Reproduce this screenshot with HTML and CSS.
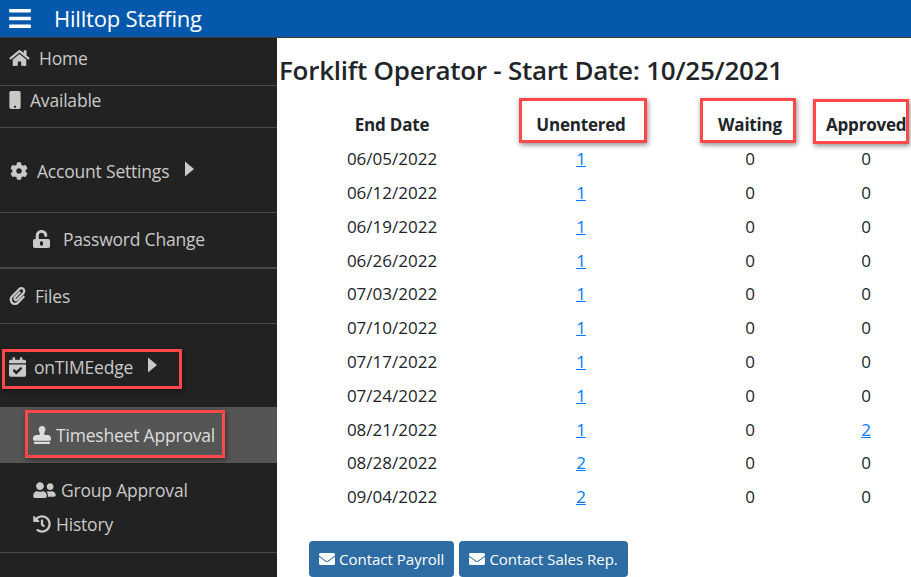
FILE: index.html
```html
<!DOCTYPE html>
<html lang="en">
<head>
<meta charset="utf-8">
<title>Hilltop Staffing</title>
<link rel="stylesheet" href="styles.css">
</head>
<body>
<header class="topbar">
  <svg class="burger" viewBox="0 0 448 512"><path d="M16 132h416c8.837 0 16-7.163 16-16V76c0-8.837-7.163-16-16-16H16C7.163 60 0 67.163 0 76v40c0 8.837 7.163 16 16 16zm0 160h416c8.837 0 16-7.163 16-16v-40c0-8.837-7.163-16-16-16H16c-8.837 0-16 7.163-16 16v40c0 8.837 7.163 16 16 16zm0 160h416c8.837 0 16-7.163 16-16v-40c0-8.837-7.163-16-16-16H16c-8.837 0-16 7.163-16 16v40c0 8.837 7.163 16 16 16z"/></svg>
  <span class="brand">Hilltop Staffing</span>
</header>
<div class="shell">
  <nav class="sidebar">
    <a class="item home">
      <svg class="ico i-home" viewBox="0 0 576 512"><path d="M280.37 148.26L96 300.11V464a16 16 0 0 0 16 16l112.06-.29a16 16 0 0 0 15.92-16V368a16 16 0 0 1 16-16h64a16 16 0 0 1 16 16v95.64a16 16 0 0 0 16 16.05L464 480a16 16 0 0 0 16-16V300L295.67 148.26a12.19 12.19 0 0 0-15.3 0zM571.6 251.47L488 182.56V44.05a12 12 0 0 0-12-12h-56a12 12 0 0 0-12 12v72.61L318.47 43a48 48 0 0 0-61 0L4.34 251.47a12 12 0 0 0-1.6 16.9l25.5 31A12 12 0 0 0 45.15 301l235.22-193.74a12.19 12.19 0 0 1 15.3 0L530.9 301a12 12 0 0 0 16.9-1.6l25.5-31a12 12 0 0 0-1.7-16.93z"/></svg>
      <span>Home</span>
    </a>
    <a class="item available">
      <svg class="ico i-mobile" viewBox="0 0 320 512"><path d="M272 0H48C21.5 0 0 21.5 0 48v416c0 26.5 21.5 48 48 48h224c26.5 0 48-21.5 48-48V48c0-26.5-21.5-48-48-48zM160 480c-17.7 0-32-14.3-32-32s14.3-32 32-32 32 14.3 32 32-14.3 32-32 32z"/></svg>
      <span>Available</span>
    </a>
    <a class="item account">
      <svg class="ico i-cog" viewBox="0 0 512 512"><path d="M487.4 315.7l-42.6-24.6c4.3-23.2 4.3-47 0-70.2l42.6-24.6c4.9-2.8 7.1-8.6 5.5-14-11.1-35.6-30-67.8-54.7-94.6-3.8-4.1-10-5.1-14.8-2.3L380.8 110c-17.9-15.4-38.5-27.3-60.8-35.1V25.8c0-5.6-3.9-10.5-9.4-11.7-36.7-8.2-74.3-7.8-109.2 0-5.5 1.2-9.4 6.1-9.4 11.7V75c-22.2 7.9-42.8 19.8-60.8 35.1L88.7 85.5c-4.9-2.8-11-1.9-14.8 2.3-24.7 26.7-43.6 58.9-54.7 94.6-1.7 5.4.6 11.2 5.5 14L67.3 221c-4.3 23.2-4.3 47 0 70.2l-42.6 24.6c-4.9 2.8-7.1 8.6-5.5 14 11.1 35.6 30 67.8 54.7 94.6 3.8 4.1 10 5.1 14.8 2.3l42.6-24.6c17.9 15.4 38.5 27.3 60.8 35.1v49.2c0 5.6 3.9 10.5 9.4 11.7 36.7 8.2 74.3 7.8 109.2 0 5.5-1.2 9.4-6.1 9.4-11.7v-49.2c22.2-7.9 42.8-19.8 60.8-35.1l42.6 24.6c4.9 2.8 11 1.9 14.8-2.3 24.7-26.7 43.6-58.9 54.7-94.6 1.5-5.5-.7-11.3-5.6-14.1zM256 336c-44.1 0-80-35.9-80-80s35.9-80 80-80 80 35.9 80 80-35.9 80-80 80z"/></svg>
      <span>Account Settings</span>
      <svg class="caret" viewBox="0 0 9 16"><path d="M0 0.5L9 8L0 15.5z"/></svg>
    </a>
    <a class="item password">
      <svg class="ico i-lock" viewBox="0 0 448 512" preserveAspectRatio="none"><path fill-rule="evenodd" d="M400 256H152V152.9c0-39.6 31.7-72.5 71.3-72.9 40-.4 72.7 32.1 72.7 72v16c0 13.3 10.7 24 24 24h32c13.3 0 24-10.7 24-24v-16C376 68 307.5-.3 223.5 0 139.5.3 72 69.5 72 153.5V256H48c-26.5 0-48 21.5-48 48v160c0 26.5 21.5 48 48 48h352c26.5 0 48-21.5 48-48V304c0-26.5-21.5-48-48-48zM264 408c0 22.1-17.900 40-40 40s-40-17.900-40-40v-48c0-22.100 17.900-40 40-40s40 17.900 40 40z"/></svg>
      <span>Password Change</span>
    </a>
    <a class="item files">
      <svg class="ico i-clip" viewBox="0 0 448 512"><path d="M43.246 466.142c-58.43-60.289-57.341-157.511 1.386-217.581L254.392 34c44.316-45.332 116.351-45.336 160.671 0 43.89 44.894 43.943 117.329 0 162.276L232.214 383.128c-29.855 30.537-78.633 30.111-107.982-.998-28.275-29.97-27.368-77.473 1.452-106.953l143.743-146.835c6.182-6.314 16.312-6.422 22.626-.241l22.861 22.379c6.315 6.182 6.422 16.312.241 22.626L171.427 319.927c-4.932 5.045-5.236 13.428-.648 18.292 4.372 4.634 11.245 4.711 15.688.165l182.849-186.851c19.613-20.062 19.613-52.725-.011-72.798-19.189-19.627-49.957-19.637-69.154 0L90.39 293.295c-34.763 35.56-35.299 93.12-1.191 128.313 34.01 35.093 88.985 35.137 123.058.286l172.06-175.999c6.177-6.319 16.307-6.433 22.626-.256l22.877 22.364c6.319 6.177 6.434 16.307.256 22.626l-172.06 175.998c-59.576 60.938-155.943 60.216-214.77-.485z"/></svg>
      <span>Files</span>
    </a>
    <a class="item edge">
      <svg class="ico i-cal" viewBox="0 0 448 512"><path d="M436 160H12c-6.627 0-12-5.373-12-12v-36c0-26.51 21.49-48 48-48h48V12c0-6.627 5.373-12 12-12h40c6.627 0 12 5.373 12 12v52h128V12c0-6.627 5.373-12 12-12h40c6.627 0 12 5.373 12 12v52h48c26.51 0 48 21.49 48 48v36c0 6.627-5.373 12-12 12zM12 192h424c6.627 0 12 5.373 12 12v260c0 26.51-21.49 48-48 48H48c-26.51 0-48-21.49-48-48V204c0-6.627 5.373-12 12-12zm333.296 95.947l-28.169-28.398c-4.667-4.705-12.265-4.736-16.97-.068L194.12 364.665l-45.98-46.352c-4.667-4.705-12.266-4.736-16.971-.068l-28.397 28.17c-4.705 4.667-4.736 12.265-.068 16.97l82.601 83.269c4.667 4.705 12.265 4.736 16.97.068l142.953-141.805c4.705-4.667 4.736-12.265.068-16.97z"/></svg>
      <span>onTIMEedge</span>
      <svg class="caret" viewBox="0 0 9 16"><path d="M0 0.5L9 8L0 15.5z"/></svg>
      <i class="mark mark-edge"></i>
    </a>
    <a class="item timesheet">
      <svg class="ico i-stamp" viewBox="0 0 512 512"><path d="M32 512h448v-64H32v64zm384-256h-66.56c-16.26 0-29.44-13.18-29.44-29.44v-9.46c0-27.37 8.88-53.41 21.46-77.72 9.11-17.61 12.9-38.39 9.05-60.42-6.77-38.78-38.47-70.7-77.26-77.45C212.62-9.04 160 37.33 160 96c0 14.16 3.12 27.54 8.69 39.58C182.02 164.43 192 194.7 192 226.49v.07c0 16.26-13.18 29.44-29.44 29.44H96c-53.02 0-96 42.98-96 96v32c0 17.67 14.33 32 32 32h448c17.67 0 32-14.33 32-32v-32c0-53.02-42.98-96-96-96z"/></svg>
      <span>Timesheet Approval</span>
      <i class="mark mark-sheet"></i>
    </a>
    <div class="group">
      <a class="item sub group-approval">
        <svg class="ico i-users" viewBox="0 0 640 512"><path d="M192 256c61.9 0 112-50.1 112-112S253.900 32 192 32 80 82.100 80 144s50.100 112 112 112zm76.800 32h-8.300c-20.800 10-43.900 16-68.500 16s-47.600-6-68.500-16h-8.300C51.600 288 0 339.600 0 403.200V432c0 26.500 21.500 48 48 48h288c26.500 0 48-21.500 48-48v-28.800c0-63.600-51.600-115.200-115.200-115.200zM480 256c53 0 96-43 96-96s-43-96-96-96-96 43-96 96 43 96 96 96zm48 32h-3.800c-13.900 4.800-28.600 8-44.200 8s-30.300-3.200-44.200-8H432c-20.400 0-39.200 5.900-55.700 15.400 24.400 26.300 39.700 61.200 39.700 99.800v38.400c0 2.200-.5 4.300-.6 6.400H592c26.500 0 48-21.500 48-48 0-61.900-50.100-112-112-112z"/></svg>
        <span>Group Approval</span>
      </a>
      <a class="item sub history">
        <svg class="ico i-history" viewBox="0 0 512 512"><path d="M504 255.531c.253 136.640-111.180 248.372-247.820 248.468-59.015.042-113.223-20.530-155.822-54.911-11.077-8.940-11.905-25.541-1.839-35.607l11.267-11.267c8.609-8.609 22.353-9.551 31.891-1.984C173.062 425.135 212.781 440 256 440c101.705 0 184-82.311 184-184 0-101.705-82.311-184-184-184-48.814 0-93.149 18.969-126.068 49.932l50.754 50.754c10.080 10.080 2.941 27.314-11.313 27.314H24c-8.837 0-16-7.163-16-16V38.627c0-14.254 17.234-21.393 27.314-11.314l49.372 49.372C129.209 34.136 189.552 8 256 8c136.810 0 247.747 110.780 248 247.531zm-180.912 78.784l9.823-12.630c8.138-10.463 6.253-25.542-4.210-33.679L288 256.349V152c0-13.255-10.745-24-24-24h-16c-13.255 0-24 10.745-24 24v135.651l65.409 50.874c10.463 8.137 25.541 6.253 33.679-4.210z"/></svg>
        <span>History</span>
      </a>
    </div>
  </nav>
  <main class="content">
    <h1 class="title">Forklift Operator - Start Date: 10/25/2021</h1>
    <table class="grid">
      <colgroup><col class="c1"><col class="c2"><col class="c3"><col class="c4"></colgroup>
      <thead>
        <tr>
          <th>End Date</th>
          <th><span class="marked">Unentered<i class="mark mark-un"></i></span></th>
          <th><span class="marked">Waiting<i class="mark mark-wait"></i></span></th>
          <th><span class="marked">Approved<i class="mark mark-app"></i></span></th>
        </tr>
      </thead>
      <tbody>
        <tr><td>06/05/2022</td><td><a>1</a></td><td>0</td><td>0</td></tr>
        <tr><td>06/12/2022</td><td><a>1</a></td><td>0</td><td>0</td></tr>
        <tr><td>06/19/2022</td><td><a>1</a></td><td>0</td><td>0</td></tr>
        <tr><td>06/26/2022</td><td><a>1</a></td><td>0</td><td>0</td></tr>
        <tr><td>07/03/2022</td><td><a>1</a></td><td>0</td><td>0</td></tr>
        <tr><td>07/10/2022</td><td><a>1</a></td><td>0</td><td>0</td></tr>
        <tr><td>07/17/2022</td><td><a>1</a></td><td>0</td><td>0</td></tr>
        <tr><td>07/24/2022</td><td><a>1</a></td><td>0</td><td>0</td></tr>
        <tr><td>08/21/2022</td><td><a>1</a></td><td>0</td><td><a>2</a></td></tr>
        <tr><td>08/28/2022</td><td><a>2</a></td><td>0</td><td>0</td></tr>
        <tr><td>09/04/2022</td><td><a>2</a></td><td>0</td><td>0</td></tr>
      </tbody>
    </table>
    <div class="actions">
      <a class="btn"><svg class="env" viewBox="0 0 512 512"><path d="M502.300 190.800c3.900-3.100 9.700-.2 9.700 4.700V400c0 26.500-21.500 48-48 48H48c-26.500 0-48-21.500-48-48V195.600c0-5 5.700-7.800 9.700-4.700 22.400 17.400 52.100 39.500 154.100 113.600 21.100 15.400 56.700 47.800 92.200 47.600 35.700.3 72-32.800 92.300-47.600 102-74.100 131.600-96.300 154-113.700zM256 320c23.200.4 56.600-29.200 73.400-41.400 132.700-96.300 142.800-104.700 173.400-128.700 5.800-4.500 9.200-11.500 9.200-18.900v-19c0-26.500-21.500-48-48-48H48C21.500 64 0 85.500 0 112v19c0 7.400 3.400 14.300 9.200 18.900 30.600 23.900 40.700 32.400 173.400 128.700 16.800 12.200 50.200 41.800 73.400 41.400z"/></svg>Contact Payroll</a>
      <a class="btn"><svg class="env" viewBox="0 0 512 512"><path d="M502.300 190.800c3.900-3.100 9.700-.2 9.700 4.700V400c0 26.500-21.500 48-48 48H48c-26.500 0-48-21.500-48-48V195.600c0-5 5.700-7.800 9.700-4.700 22.400 17.400 52.100 39.500 154.100 113.600 21.100 15.400 56.700 47.800 92.200 47.600 35.700.3 72-32.800 92.300-47.600 102-74.100 131.600-96.300 154-113.700zM256 320c23.200.4 56.600-29.200 73.400-41.400 132.700-96.300 142.800-104.700 173.400-128.700 5.800-4.500 9.200-11.500 9.200-18.900v-19c0-26.500-21.500-48-48-48H48C21.500 64 0 85.500 0 112v19c0 7.400 3.400 14.300 9.200 18.900 30.600 23.900 40.700 32.400 173.400 128.700 16.800 12.200 50.200 41.800 73.400 41.400z"/></svg>Contact Sales Rep.</a>
    </div>
  </main>
</div>
</body>
</html>
```

FILE: styles.css
```css
* { box-sizing: border-box; }
html, body { margin: 0; height: 100%; }
body {
  width: 911px;
  height: 577px;
  overflow: hidden;
  font-family: "Open Sans", "Noto Sans", "Liberation Sans", sans-serif;
  background: #fff;
  color: #212529;
}

.topbar {
  height: 38px;
  background: #0558ab;
  color: #fff;
  display: flex;
  align-items: center;
  padding-left: 9px;
  border-bottom: 1px solid #3a3a3a;
}
.burger { width: 22px; height: 25px; fill: #fff; }
.brand { margin-left: 23px; font-size: 22px; letter-spacing: -0.2px; padding-bottom: 1px; }

.shell { display: flex; height: 539px; }

.sidebar {
  width: 277px;
  flex: none;
  background: #222;
  color: #c9c9c9;
  font-size: 17.5px;
  letter-spacing: -0.2px;
}
.item {
  display: flex;
  align-items: center;
  position: relative;
  border-bottom: 1px solid #4a4a4a;
}
.ico { fill: #c9c9c9; flex: none; }
.caret { width: 9px; height: 16px; fill: #c9c9c9; flex: none; }

.home { height: 48px; padding: 0 0 7px 9px; gap: 9px; }
.i-home { width: 21px; height: 18px; }
.available { height: 42px; padding: 0 0 13px 9px; gap: 9px; }
.i-mobile { width: 12px; height: 18px; }
.account { height: 85px; padding: 2px 0 0 10px; gap: 9px; }
.i-cog { width: 18px; height: 18px; }
.account .caret { margin-left: 7px; margin-top: -4px; }
.password { height: 56px; padding: 0 0 2px 33px; gap: 13px; border-bottom: 2px solid #4a4a4a; }
.i-lock { width: 17px; height: 18px; }
.files { height: 55px; padding: 2px 0 2px 9px; gap: 9px; }
.i-clip { width: 17px; height: 18px; }
.edge { height: 83px; padding: 3px 0 0 9px; gap: 8px; border-bottom: 0; }
.i-cal { width: 17px; height: 20px; }
.edge .caret { margin-left: 7px; margin-top: -4px; }
.timesheet { height: 56px; padding: 0 0 1px 33px; gap: 5px; background: #555; border-bottom: 0; color: #ddd; }
.i-stamp { width: 18px; height: 18px; fill: #ddd; }
.group { height: 90px; padding-top: 10px; border-bottom: 1px solid #4a4a4a; }
.sub { height: 34px; padding-left: 33px; border-bottom: 0; }
.group-approval { gap: 5px; }
.i-users { width: 23px; height: 18px; }
.history { gap: 5px; }
.i-history { width: 18px; height: 18px; }

.content { flex: 1; min-width: 0; padding: 15px 0 0 2px; overflow: hidden; }
.title { margin: 0; font-size: 26px; font-weight: 600; line-height: 34px; letter-spacing: -0.25px; white-space: nowrap; }

.grid { border-collapse: collapse; table-layout: fixed; width: 610px; margin: 21px 0 0 17px; font-size: 17px; }
.c1 { width: 192px; } .c2 { width: 186px; } .c3 { width: 152px; } .c4 { width: 80px; }
.grid th, .grid td { padding: 0; text-align: center; height: 33.8px; }
.grid th { font-size: 17px; font-weight: 700; letter-spacing: -0.2px; }
.grid a { color: #007bff; text-decoration: underline; }
.marked { position: relative; display: inline-block; }

.mark {
  position: absolute;
  display: block;
  border: 3px solid #ff4848;
  box-shadow: 1px 2px 5px rgba(0, 0, 0, 0.45);
}
.mark-edge { left: 2px; top: 25px; width: 180px; height: 40px; }
.mark-sheet { left: 25px; top: 3px; width: 200px; height: 48px; }
.mark-un { left: -17px; top: -15px; width: 128px; height: 45px; }
.mark-wait { left: -18px; top: -15px; width: 96px; height: 45px; }
.mark-app { left: -13px; top: -14px; width: 96px; height: 45px; }

.actions { display: flex; gap: 5px; margin: 27px 0 0 30px; }
.btn {
  height: 36px;
  padding: 0 10px;
  display: flex;
  align-items: center;
  gap: 4px;
  background: #2e6da4;
  color: #fff;
  border-radius: 4px;
  font-size: 15px;
  white-space: nowrap;
}
.env { width: 16px; height: 16px; fill: #fff; }
```
